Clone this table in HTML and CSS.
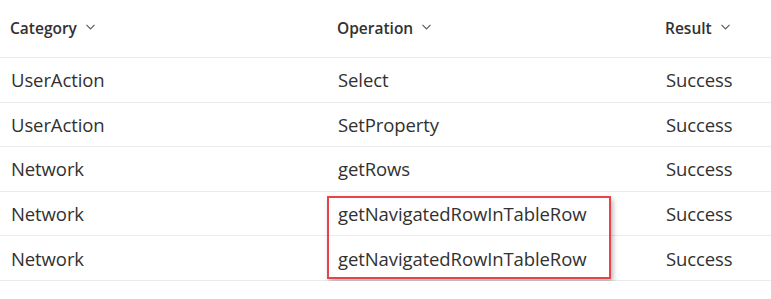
FILE: index.html
```html
<!DOCTYPE html>
<html lang="en">
<head>
    <meta charset="UTF-8">
    <meta name="viewport" content="width=device-width, initial-scale=1.0">
    <title>Monitor Events</title>
    <link rel="stylesheet" href="styles.css">
</head>
<body>
    <div class="events">
        <div class="row head">
            <div class="cell">Category <span class="chev"><svg width="9" height="6" viewBox="0 0 9 6"><path d="M0.5 0.8 L4.5 4.8 L8.5 0.8" fill="none" stroke="#605e5c" stroke-width="1.2"/></svg></span></div>
            <div class="cell">Operation <span class="chev"><svg width="9" height="6" viewBox="0 0 9 6"><path d="M0.5 0.8 L4.5 4.8 L8.5 0.8" fill="none" stroke="#605e5c" stroke-width="1.2"/></svg></span></div>
            <div class="cell">Result <span class="chev"><svg width="9" height="6" viewBox="0 0 9 6"><path d="M0.5 0.8 L4.5 4.8 L8.5 0.8" fill="none" stroke="#605e5c" stroke-width="1.2"/></svg></span></div>
        </div>
        <div class="row">
            <div class="cell">UserAction</div>
            <div class="cell">Select</div>
            <div class="cell">Success</div>
        </div>
        <div class="row">
            <div class="cell">UserAction</div>
            <div class="cell">SetProperty</div>
            <div class="cell">Success</div>
        </div>
        <div class="row">
            <div class="cell">Network</div>
            <div class="cell">getRows</div>
            <div class="cell">Success</div>
        </div>
        <div class="row">
            <div class="cell">Network</div>
            <div class="cell">getNavigatedRowInTableRow</div>
            <div class="cell">Success</div>
        </div>
        <div class="row">
            <div class="cell">Network</div>
            <div class="cell">getNavigatedRowInTableRow</div>
            <div class="cell">Success</div>
        </div>

        <!-- callout around the two navigation calls -->
        <div class="highlight"></div>
    </div>
</body>
</html>
```

FILE: styles.css
```css
body {
    margin: 0;
    background: #ffffff;
    font-family: "Open Sans", "Noto Sans", sans-serif;
    color: #323130;
}
.events {
    position: relative;
    width: 771px;
}
.row {
    display: grid;
    grid-template-columns: 327px 328px 1fr;
    height: 44.6px;
    border-bottom: 1px solid #edebe9;
    box-sizing: border-box;
    align-items: center;
    font-size: 18.5px;
    letter-spacing: -0.1px;
}
.row .cell {
    padding-left: 11px;
    white-space: nowrap;
}
.row.head {
    height: 58px;
    font-size: 15.5px;
    font-weight: 600;
    letter-spacing: 0;
    padding-bottom: 2px;
}
.row.head .cell {
    padding-left: 10px;
}
.chev {
    display: inline-block;
    margin-left: 5px;
    vertical-align: 4px;
}
.chev svg {
    display: block;
}
.highlight {
    position: absolute;
    left: 327px;
    top: 196px;
    width: 284px;
    height: 83px;
    box-sizing: border-box;
    border: 2px solid #e8434b;
    box-shadow: 2px 3px 5px rgba(0, 0, 0, 0.28);
}
```
